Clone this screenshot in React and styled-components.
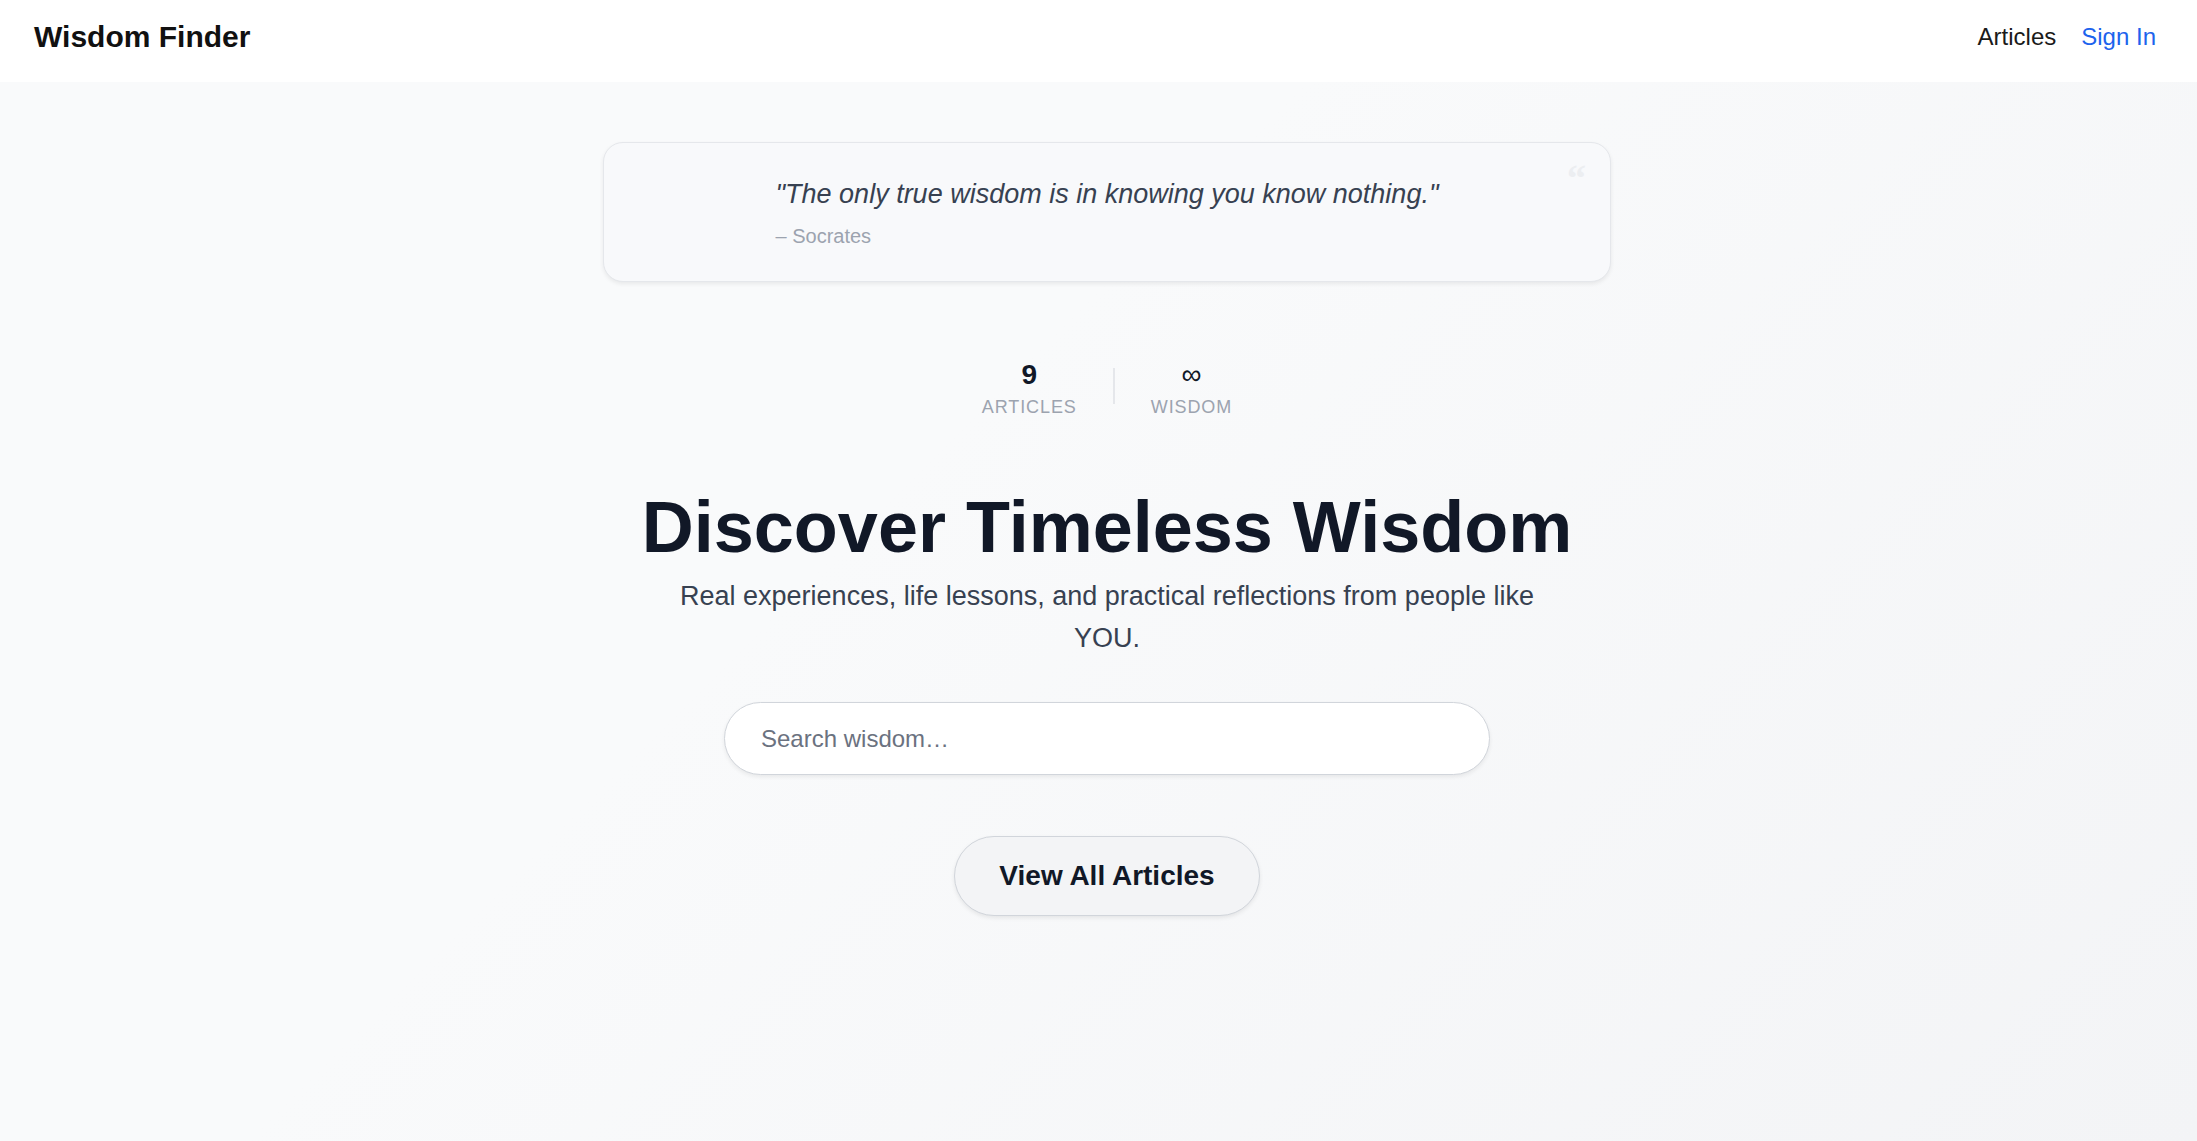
import React from 'react'
import styled, { createGlobalStyle } from 'styled-components'

const GlobalStyle = createGlobalStyle`
    *{
        box-sizing:border-box;
    }
    body{
        margin:0;
        font-family:"Liberation Sans", Arial, sans-serif;
        background:#f9fafb;
    }
`

const App = () => {
    return (
        <>
            <GlobalStyle />
            <Header>
                <Brand>Wisdom Finder</Brand>
                <Nav>
                    <NavLink href="#">Articles</NavLink>
                    <NavLink href="#" $accent>Sign In</NavLink>
                </Nav>
            </Header>
            <Main>
                <QuoteCard>
                    <QuoteMark>&ldquo;</QuoteMark>
                    <QuoteBody>
                        <QuoteText>"The only true wisdom is in knowing you know nothing."</QuoteText>
                        <Author>– Socrates</Author>
                    </QuoteBody>
                </QuoteCard>

                <Stats>
                    <Stat>
                        <StatValue>9</StatValue>
                        <StatLabel>Articles</StatLabel>
                    </Stat>
                    <Divider />
                    <Stat>
                        <StatValue $symbol>∞</StatValue>
                        <StatLabel>Wisdom</StatLabel>
                    </Stat>
                </Stats>

                <Title>Discover Timeless Wisdom</Title>
                <Subtitle>
                    Real experiences, life lessons, and practical reflections from people like YOU.
                </Subtitle>

                <Search type="text" placeholder="Search wisdom…" />

                <Button>View All Articles</Button>
            </Main>
        </>
    )
}

export default App

const Header = styled.header`
    height:82px;
    display:flex;
    justify-content:space-between;
    align-items:center;
    padding:0 41px 8px 34px;
    background:#fff;
`

const Brand = styled.h1`
    margin:0;
    font-size:30px;
    font-weight:700;
    color:#111;
`

const Nav = styled.nav`
    display:flex;
    align-items:center;
    gap:25px;
`

const NavLink = styled.a`
    font-size:24px;
    text-decoration:none;
    color:${p => p.$accent ? '#1d63ed' : '#1a1a1a'};
`

const Main = styled.main`
    min-height:calc(100vh - 82px);
    display:flex;
    flex-direction:column;
    align-items:center;
    padding:60px 0 80px 17px;
    background:linear-gradient(135deg, #f9fafb 0%, #f9fafb 40%, #f3f4f6 100%);
`

const QuoteCard = styled.section`
    position:relative;
    width:1008px;
    padding:33px 0 31px;
    background:#f8f9fb;
    border:1px solid #e5e7eb;
    border-radius:20px;
    box-shadow:0 2px 4px rgba(0,0,0,0.07);
`

const QuoteMark = styled.span`
    position:absolute;
    top:16px;
    right:24px;
    font-family:"Liberation Serif", serif;
    font-size:38px;
    font-weight:700;
    line-height:1;
    color:#eceef1;
`

const QuoteBody = styled.div`
    width:fit-content;
    margin:0 auto;
`

const QuoteText = styled.p`
    margin:0;
    font-size:27px;
    line-height:1.4;
    font-style:italic;
    color:#374151;
`

const Author = styled.p`
    margin:8px 0 0;
    font-size:20px;
    line-height:1.4;
    color:#9ca3af;
`

const Stats = styled.div`
    display:flex;
    align-items:center;
    gap:36px;
    margin-top:76px;
`

const Stat = styled.div`
    display:flex;
    flex-direction:column;
    align-items:center;
    gap:5px;
`

const StatValue = styled.div`
    font-size:28px;
    font-weight:${p => p.$symbol ? 400 : 700};
    line-height:1.2;
    color:#111827;
`

const StatLabel = styled.div`
    font-size:18px;
    line-height:1.3;
    letter-spacing:0.05em;
    text-transform:uppercase;
    color:#9ca3af;
`

const Divider = styled.div`
    width:2px;
    height:36px;
    margin-top:-5px;
    background:#e5e7eb;
`

const Title = styled.h2`
    margin:64px 0 0;
    font-size:72px;
    line-height:1.2;
    font-weight:700;
    color:#111827;
`

const Subtitle = styled.p`
    max-width:880px;
    margin:5px 0 0;
    font-size:27px;
    line-height:42px;
    text-align:center;
    color:#374151;
`

const Search = styled.input`
    width:766px;
    height:73px;
    margin-top:43px;
    padding:0 36px;
    font-family:inherit;
    font-size:24px;
    color:#111827;
    background:#fff;
    border:1px solid #d1d5db;
    border-radius:999px;
    box-shadow:0 2px 4px rgba(0,0,0,0.07);
    outline:none;
    &::placeholder{
        color:#6b7280;
    }
`

const Button = styled.button`
    height:80px;
    margin-top:61px;
    padding:0 44px;
    font-family:inherit;
    font-size:28px;
    font-weight:700;
    color:#111827;
    background:#f3f4f6;
    border:1px solid #d1d5db;
    border-radius:999px;
    box-shadow:0 2px 4px rgba(0,0,0,0.08);
    cursor:pointer;
`
